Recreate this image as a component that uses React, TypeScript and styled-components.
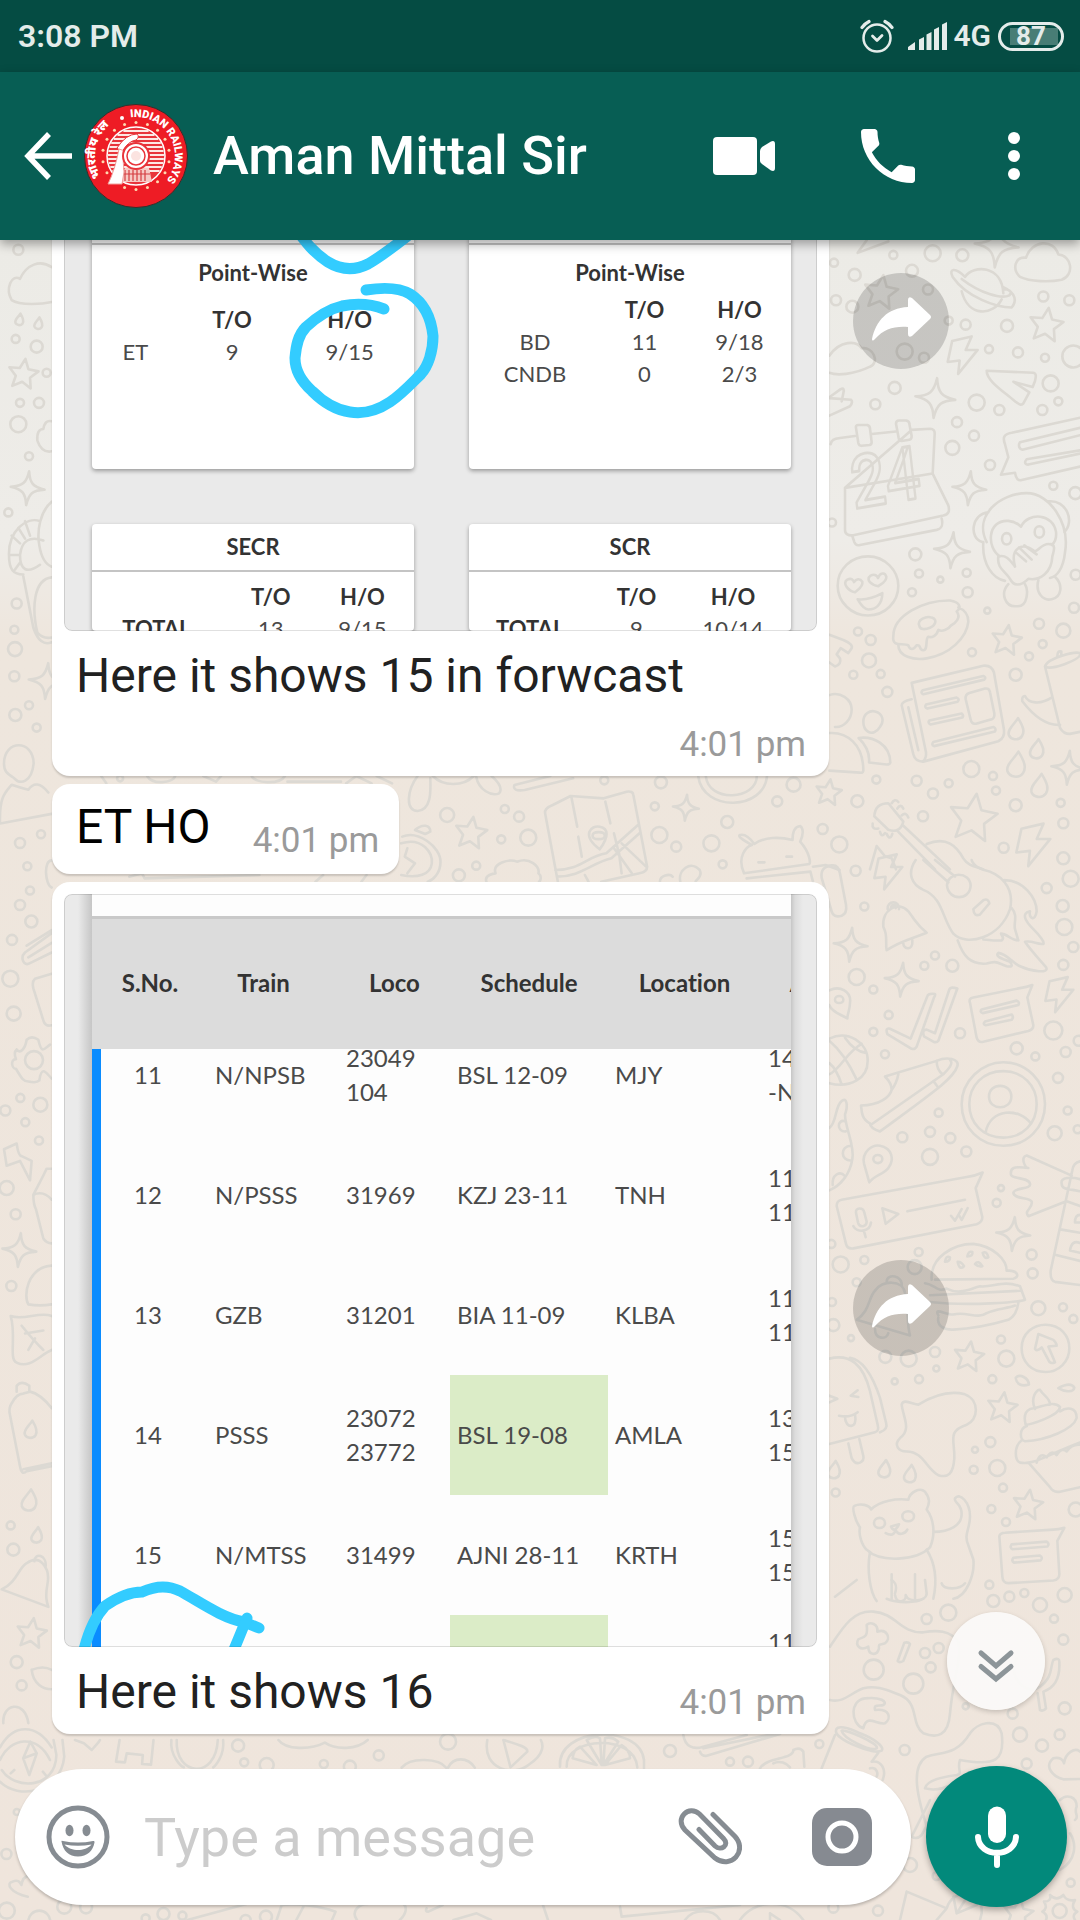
import React from "react";
import styled, { createGlobalStyle } from "styled-components";

const GlobalStyle = createGlobalStyle`
  * { box-sizing: border-box; }
  body { margin: 0; font-family: Roboto, "Noto Sans", sans-serif; background: #eee6dd; }
  button { border: 0; padding: 0; background: none; color: inherit; font: inherit; cursor: pointer; }
  svg { display: block; }
`;

/* ---------- wallpaper ---------- */

type Mark = [number, number, number];

interface SceneProps {
  x: number;
  y: number;
  sx: number;
  sy: number;
  dots?: Mark[];
  stars?: Mark[];
  sparks?: Mark[];
  drops?: Mark[];
  bolts?: Mark[];
  paths?: string[];
  children?: React.ReactNode;
}

const WallpaperLayer = styled.svg`
  position: absolute;
  inset: 0;
  width: 100%;
  height: 100%;
  fill: none;
  stroke: #dcd9d3;
  stroke-width: 2.6;
  stroke-linecap: round;
  stroke-linejoin: round;
  & * { vector-effect: non-scaling-stroke; }
`;

const STAR = "M0-10 2.9-3.5 9.8-3 4.8 2 6.2 9 0 5.4-6.2 9-4.8 2-9.8-3-2.9-3.5Z";
const SPARK = "M0-10C1-3 3-1 10 0C3 1 1 3 0 10C-1 3-3 1-10 0C-3-1-1-3 0-10Z";
const DROP = "M1-10C7-2 8 2 6 6C3 11-4 10-6 6C-8 1-2-4 1-10Z";
const BOLT = "M-7-9 6-12 2-3 10-3-3 13-2 4-10 5Z";

function Scene({ x, y, sx, sy, dots = [], stars = [], sparks = [], drops = [], bolts = [], paths = [], children }: SceneProps) {
  const place = (m: Mark, d: string, turn: number) => (
    <path
      key={d + m.join()}
      d={d}
      transform={`translate(${x + m[0] * sx} ${y + m[1] * sy}) rotate(${turn}) scale(${m[2] / 10})`}
    />
  );
  return (
    <g>
      {dots.map((m) => <circle key={m.join()} cx={x + m[0] * sx} cy={y + m[1] * sy} r={m[2]} />)}
      {stars.map((m) => place(m, STAR, 8))}
      {sparks.map((m) => place(m, SPARK, 5))}
      {drops.map((m) => place(m, DROP, 5))}
      {bolts.map((m) => place(m, BOLT, 0))}
      <g transform={`translate(${x} ${y}) scale(${sx} ${sy})`}>
        {paths.map((d) => <path key={d} d={d} />)}
        {children}
      </g>
    </g>
  );
}

function Wallpaper() {
  return (
    <WallpaperLayer viewBox="0 240 1080 1680" preserveAspectRatio="xMinYMax slice" aria-hidden="true">
      <Scene
        x={820} y={230} sx={1 / 3} sy={0.408}
        dots={[
          [338, 57, 8], [220, 61, 4], [427, 62, 6], [42, 80, 4], [104, 110, 6], [276, 100, 6], [48, 172, 5], [97, 188, 6],
          [324, 146, 5], [254, 298, 8], [312, 313, 5], [386, 222, 4], [437, 232, 5], [561, 235, 6], [670, 163, 5], [748, 172, 5],
          [507, 292, 4], [594, 300, 5], [675, 313, 4], [760, 310, 11], [224, 387, 6], [166, 427, 5], [470, 423, 8], [538, 441, 5],
          [692, 376, 8], [715, 420, 4], [667, 441, 5], [411, 471, 5], [462, 504, 5], [397, 534, 7], [510, 576, 5], [700, 627, 4],
          [766, 645, 6], [36, 717, 4], [286, 795, 6], [297, 842, 4], [361, 857, 3], [440, 840, 4], [276, 888, 4], [443, 888, 5],
          [502, 933, 3], [767, 845, 5], [762, 926, 5], [114, 984, 4], [152, 1005, 5], [147, 1055, 7], [100, 1090, 4], [182, 1088, 4],
          [202, 1132, 5], [456, 1035, 4], [657, 965, 5], [668, 1015, 4], [627, 1045, 4], [730, 982, 7], [587, 1090, 6],
          [169, 1347, 4], [290, 1350, 5], [339, 1381, 5], [386, 1356, 4], [454, 1321, 8], [519, 1338, 4], [528, 1374, 4],
          [112, 1400, 6], [309, 1437, 5], [587, 1410, 6], [722, 1404, 4], [730, 1454, 5], [551, 1514, 5], [58, 1506, 8], [730, 1540, 6],
        ]}
        stars={[[183, 152, 17], [679, 232, 17], [560, 1005, 15], [460, 1440, 24], [26, 1378, 13]]}
        sparks={[[346, 412, 20], [448, 633, 17], [396, 785, 18], [745, 1318, 17], [530, 38, 22]]}
        drops={[[588, 1223, 11], [650, 1272, 10], [588, 1310, 13], [658, 1362, 12]]}
        bolts={[[428, 305, 15], [640, 1505, 17]]}
        paths={[
          "M600 115C575 95 585 65 618 68C635 25 700 20 715 60C755 62 765 110 725 122C690 128 630 127 600 115Z",
          "M425 150C445 215 520 210 545 170M435 115C460 85 545 85 550 155M425 120C480 155 545 170 568 160C580 150 565 145 550 145M435 115C405 90 385 95 398 115C440 165 530 190 575 190C590 175 590 155 550 140",
          "M28 308C60 270 110 270 125 290C160 285 180 325 150 335C100 355 50 357 28 350",
          "M113 56 140 25M113 56 205 28",
          "M500 345 640 350C650 352 648 360 645 370L638 385 580 372 628 398 610 425C600 432 595 425 585 420C550 395 500 370 500 345Z",
          "M32 525C35 515 40 512 60 510L105 505M155 500 228 494M275 490 330 487Q345 487 344 500L338 597 385 675C390 690 385 697 370 700L100 748C85 750 75 745 75 735V632ZM75 632 338 597M97 750 103 765Q108 775 120 772L350 735C365 732 370 725 365 707M108 485Q106 478 115 478H142Q150 480 150 487L155 520Q155 526 148 527L125 529Q117 529 115 522ZM228 475Q228 467 237 467H258Q268 468 268 475L275 505Q275 513 268 514L245 517Q238 517 236 510Z",
          "M780 460 575 497C550 500 548 510 555 525L565 557 543 600 585 595C588 610 595 615 605 613L780 580M780 485 600 520C593 530 600 540 610 538L780 503M780 540 620 562C612 570 615 575 625 575L780 548",
          "M500 765C460 700 540 645 620 645C690 645 750 720 735 790C730 830 710 850 690 853M490 765C485 820 520 855 555 860M505 692C455 695 445 755 487 765M685 665C740 660 765 715 733 740M540 800C500 780 500 710 565 713C590 715 595 722 603 727C625 690 700 695 708 740C710 755 705 765 695 772M535 800C560 795 570 810 585 825C570 780 605 765 640 785C650 795 665 765 690 770C710 770 700 790 697 800C695 840 660 860 625 855C600 875 580 872 570 855C555 835 530 830 535 800ZM613 773 650 795M597 778 635 808M590 792 618 812M565 868C540 890 555 925 590 922C625 925 625 880 615 868M655 858C645 890 670 910 695 905C725 900 730 870 705 850",
          "M53 872C53 830 95 800 144 800C195 800 235 835 235 872C235 912 195 945 144 945C95 945 53 912 53 872ZM105 888C85 885 65 865 82 857C95 852 100 858 102 863C108 855 120 853 127 862C130 875 112 882 105 888ZM175 873C155 870 135 858 152 847C165 842 172 848 174 853C180 840 195 838 199 850C200 862 182 868 175 873ZM113 905C135 907 165 900 187 890C187 920 165 930 145 930C130 930 120 915 113 905Z",
          "M220 995C220 945 310 907 390 908C420 912 425 925 410 935C425 950 405 965 392 970C385 980 365 985 355 980C350 995 335 1000 325 997C315 1000 325 1030 310 1030C295 1030 305 1015 290 1018C280 1030 270 1030 265 1018C250 1010 215 1025 220 995ZM235 1018C235 1045 280 1055 320 1050C390 1040 440 1000 445 960C445 940 430 930 415 925M298 970C290 955 320 945 335 950C355 955 345 970 330 975C315 980 300 980 298 970Z",
          "M28 992 70 1005Q100 1015 95 1025L85 1037 62 1025 50 1040 60 1050Q65 1065 45 1070L28 1060",
          "M275 1110 490 1068Q515 1066 522 1085L552 1225Q555 1245 535 1253L310 1303Q285 1303 280 1285L245 1165Q245 1155 275 1150M275 1110 318 1280Q320 1295 308 1303M265 1170 295 1275M308 1128 490 1093Q500 1097 493 1102L310 1138Q300 1134 308 1128ZM318 1163 410 1146Q420 1150 413 1156L322 1173Q312 1170 318 1163ZM328 1202 425 1185Q432 1190 427 1195L332 1212Q322 1208 328 1202ZM340 1255 520 1218Q530 1222 525 1229L342 1265Q333 1262 340 1255ZM437 1150Q435 1138 448 1135L495 1124Q508 1122 510 1133L523 1185Q525 1198 512 1200L468 1210Q455 1212 452 1200Z",
          "M675 1070 720 1220Q730 1235 750 1235L780 1230M675 1070C680 1050 770 1030 782 1038C780 1055 690 1080 675 1070ZM712 1045Q712 1030 724 1033V1042M697 1145C660 1165 625 1160 615 1142Q605 1142 607 1155C640 1190 680 1215 720 1213",
          "M28 1140C60 1130 95 1150 95 1175C95 1200 70 1220 45 1218M28 1233C80 1230 130 1260 130 1325Q128 1332 120 1330L28 1325M130 1205C130 1185 150 1177 165 1180C190 1185 193 1205 180 1218C170 1232 155 1235 145 1230C135 1225 130 1215 130 1205ZM116 1245C160 1240 210 1260 211 1305Q210 1310 200 1310L147 1305C150 1280 135 1260 116 1245Z",
          "M28 455 90 432Q100 422 93 416L28 412M28 410 62 390Q75 385 70 400L65 420",
          "M163 1437Q165 1405 205 1405L250 1450Q240 1480 205 1470ZM250 1460 390 1567M235 1475 345 1567M215 1405Q225 1392 235 1402M232 1418Q242 1405 250 1418M245 1435Q258 1425 265 1440M158 1455Q155 1470 175 1467M180 1475Q185 1490 195 1478M200 1480Q210 1498 217 1480M320 1505C380 1485 410 1510 430 1540C445 1560 470 1560 490 1567M170 1510 195 1535 215 1540 228 1567M170 1510 150 1567",
        ]}
      >
        <circle cx={560} cy={757} r={14} /><circle cx={658} cy={740} r={14} />
        <text x={102} y={684} fontFamily="Roboto, sans-serif" fontSize={182} fontWeight={500} transform="rotate(-8 102 684)">24</text>
      </Scene>

      <Scene
        x={820} y={860} sx={1 / 3} sy={0.4464}
        dots={[
          [107, 24, 5], [133, 104, 4], [110, 262, 8], [160, 290, 4], [313, 237, 4], [345, 214, 4], [397, 237, 6], [206, 347, 4], [160, 385, 4],
          [195, 435, 4], [420, 388, 5], [680, 63, 5], [752, 42, 8], [728, 103, 6], [733, 150, 8], [760, 195, 5], [730, 235, 5], [700, 382, 9],
          [590, 422, 6], [646, 440, 4], [737, 430, 5], [714, 488, 5], [776, 405, 5], [743, 561, 4], [704, 612, 7], [773, 603, 4], [356, 566, 4],
          [247, 621, 5], [330, 609, 5], [391, 623, 5], [439, 653, 5], [330, 665, 8], [543, 735, 3], [530, 768, 4], [296, 878, 4], [62, 906, 8],
          [133, 896, 4], [284, 912, 7], [110, 946, 4], [40, 1042, 6], [93, 1071, 3], [635, 884, 5], [638, 926, 5], [655, 1004, 7], [729, 1002, 4],
          [760, 1028, 4], [543, 1074, 4], [559, 1117, 8], [345, 1102, 5], [349, 1139, 3], [297, 1163, 4], [196, 1113, 6], [266, 1117, 8], [224, 1168, 3],
          [517, 1163, 4], [465, 1321, 3], [511, 1304, 5], [461, 1366, 4], [532, 1362, 8], [549, 1406, 4], [514, 1454, 4], [558, 1483, 4], [767, 1455, 7],
          [47, 1417, 4], [36, 990, 4], [34, 860, 4],
        ]}
        stars={[[447, 1112, 15], [547, 1226, 15], [624, 1444, 15]]}
        sparks={[[92, 190, 17], [245, 268, 17], [580, 838, 17]]}
        drops={[[193, 1364, 9], [270, 1375, 9], [42, 1366, 9]]}
        bolts={[[718, 300, 14], [205, 25, 14]]}
        paths={[
          "M5 40Q0 15 35 12Q55 10 60 30L78 100Q82 120 65 125Q40 130 35 115Z",
          "M287 0C260 30 275 55 310 67C370 85 365 130 400 165C440 195 540 175 570 110C585 60 540 30 490 22C460 15 455 0 455 0M310 0 385 50M345 0 405 37M381 57C383 25 450 25 452 57C450 92 385 92 381 57ZM460 110 490 90Q505 85 508 97L480 122Q462 128 460 110ZM553 45C610 45 650 85 650 115C645 140 625 130 630 115C600 120 620 140 640 155C660 170 675 185 670 188C650 190 640 180 615 183C630 200 655 220 678 240C690 255 635 250 600 238C580 232 560 210 535 208C525 215 540 220 570 228C580 238 575 240 560 238C530 230 530 225 500 232C450 235 430 215 413 180M575 108C595 125 580 140 585 155L595 180C575 180 560 165 543 165C545 170 555 175 545 180C520 182 505 178 490 178",
          "M190 150C185 110 235 90 265 115C295 145 290 145 320 163C270 178 245 180 200 202C195 185 205 170 190 150ZM203 110C200 90 240 90 237 110M213 107C215 98 230 100 227 108M250 187C250 200 280 205 277 180",
          "M28 292C60 280 95 295 90 320C90 335 82 345 82 355C60 345 35 340 28 325M45 313C45 302 70 302 70 313C70 323 45 323 45 313Z",
          "M28 400C85 380 145 410 143 450C143 490 90 512 28 500M28 405C60 425 90 460 110 492M75 398C95 420 120 430 138 432M125 412C80 430 60 470 28 480M28 455C45 465 55 480 65 503",
          "M202 390Q195 375 210 378L272 400 322 305Q325 298 345 300 347 302 342 308L290 418Q285 425 275 423ZM312 395Q305 380 320 380L345 388 388 290Q392 283 412 288L355 405Q350 410 340 407Z",
          "M450 320Q445 310 460 308L600 287Q620 285 637 280L622 308 640 370Q640 380 625 383L490 407Q475 410 470 398ZM485 335 590 315Q600 318 595 325L488 343Q478 340 485 335ZM495 362 575 346Q582 352 575 358L497 370Q487 368 495 362Z",
          "M123 550C180 550 210 530 215 515Q215 500 195 485L350 450C380 440 420 445 412 462C400 490 340 520 180 608Q150 600 150 590C125 580 125 565 123 550ZM155 592 370 480C390 465 400 455 390 447M235 480Q230 500 215 515M350 450Q350 470 368 480M340 495 355 510",
          "M425 547C425 495 485 453 550 453C620 453 675 495 675 547C675 600 620 640 550 640C480 640 425 600 425 547ZM448 547C448 505 490 473 550 473C608 473 650 505 650 547C650 590 608 622 550 622C490 622 448 590 448 547ZM507 530C507 498 574 498 574 530C574 562 507 562 507 530ZM497 610C510 555 600 555 632 590",
          "M28 600C50 590 45 550 65 540C80 530 85 550 75 570C75 600 105 640 97 670C90 705 60 730 28 740M75 585C50 580 50 610 77 608M93 640C60 640 60 675 95 673M75 708C60 695 35 705 38 728",
          "M132 680C125 655 155 637 180 640C215 645 225 670 205 690C190 705 165 705 148 722ZM160 670C160 658 187 658 187 670C187 682 160 682 160 670Z",
          "M50 775Q50 763 65 761L440 710Q465 708 488 700L467 735 487 800Q487 812 470 816L100 870Q82 872 78 860ZM262 787 435 761M187 780 235 793 197 815ZM108 790C105 778 130 777 133 790L140 810C140 822 118 825 114 812ZM100 820C110 835 150 835 153 812M132 832 137 845M393 797 405 808 425 782M418 797 425 806 443 780",
          "M755 707 620 662C600 665 615 690 625 690C580 685 570 690 573 705C575 715 625 710 630 725C635 738 585 733 580 745C580 760 630 755 635 765C640 780 610 785 625 798L737 765M780 675Q760 678 757 695L692 920Q690 942 705 945L780 952M725 725C720 710 755 710 780 715M725 725C725 740 755 737 780 742M742 765 780 775M725 828 780 835M708 885 780 898M780 795Q765 795 765 812H780M780 858Q755 850 750 875L780 880",
          "M335 940C330 890 400 860 460 860C520 865 560 895 560 920C595 918 600 935 580 938L345 940M315 948C345 950 350 970 380 960C420 975 450 960 480 955C520 958 550 940 600 955L615 985C600 990 450 1000 330 990M330 975 600 965M355 1025C350 1045 375 1053 400 1052C460 1050 520 1040 565 1030Q590 1020 595 992M355 1020C340 1000 380 1020 400 1018C440 1010 470 1030 500 1015C530 1005 560 1005 585 998",
          "M375 900Q378 885 390 890Q390 900 375 900ZM413 900Q425 900 432 910Q418 920 413 900ZM442 888Q445 875 457 878Q460 888 442 888ZM465 905Q475 895 487 910Q475 912 465 905ZM488 880Q500 875 505 890Q492 895 488 880Z",
          "M605 1094C605 1060 640 1041 677 1041C720 1041 748 1065 748 1094C748 1125 715 1147 677 1147C635 1147 605 1125 605 1094ZM655 1062Q650 1080 645 1095Q650 1102 665 1092L685 1120Q690 1130 705 1125L685 1090 710 1088Q710 1082 700 1075Z",
          "M110 1030C150 1010 145 980 165 965C185 940 250 940 255 970C265 1000 260 1040 270 1065ZM200 945C200 925 250 930 245 955M165 1050C165 1075 200 1075 205 1060",
          "M28 1117C90 1105 130 1130 150 1190L173 1265Q178 1280 165 1282L28 1308M90 1115C130 1120 160 1160 180 1205L198 1260Q205 1275 180 1282M85 1307 95 1340Q105 1355 120 1350Q133 1345 130 1335L118 1297M113 1188 92 1200 115 1203M28 1200 52 1207 28 1215M57 1245Q90 1250 113 1237M75 1248C75 1275 115 1275 105 1243",
          "M245 1220C250 1205 280 1220 295 1220C350 1195 400 1190 435 1197C480 1210 475 1255 440 1265C380 1280 405 1300 403 1340C400 1375 385 1385 355 1378C320 1365 310 1325 260 1325C235 1325 220 1310 240 1295C275 1275 250 1250 245 1220Z",
          "M645 1230C630 1205 650 1185 660 1187C670 1200 690 1205 690 1220M630 1230C670 1225 700 1210 720 1225C720 1245 630 1265 617 1265C610 1245 615 1235 630 1230ZM620 1268C595 1275 600 1300 615 1302C680 1300 760 1275 770 1250C770 1225 740 1225 720 1235M605 1300C580 1315 585 1345 600 1350C640 1355 660 1340 780 1305M628 1352 690 1405Q700 1418 720 1415L780 1405M650 1350Q660 1325 680 1338Q695 1320 710 1333Q725 1315 740 1325Q755 1308 780 1310M587 1160C600 1150 625 1160 627 1175C605 1180 590 1175 587 1160ZM715 1183C730 1190 760 1195 763 1182C755 1172 735 1175 715 1183Z",
          "M120 1495C105 1480 95 1450 103 1447C120 1440 150 1445 153 1455C180 1435 230 1430 265 1433C270 1415 300 1405 315 1415C330 1430 330 1440 320 1455C345 1480 345 1515 330 1540C290 1570 180 1575 140 1545C125 1535 115 1510 120 1495ZM162 1485C162 1470 195 1470 195 1485C195 1500 162 1500 162 1485ZM247 1470C247 1455 282 1455 282 1470C282 1485 247 1485 247 1470ZM213 1493C220 1505 230 1500 237 1488ZM197 1508C215 1515 225 1510 226 1500C235 1515 255 1510 262 1500M340 1505C390 1505 425 1490 425 1465C425 1440 400 1440 405 1430C420 1415 450 1440 450 1470C450 1500 430 1510 445 1535L460 1567C465 1600 440 1650 400 1655",
          "M538 1515Q540 1507 555 1507L700 1500Q715 1500 733 1496L712 1525 718 1600Q718 1612 700 1614L565 1620Q548 1620 547 1605ZM575 1533 680 1527Q690 1532 682 1538L577 1544Q568 1540 575 1533ZM580 1563 660 1558Q670 1563 662 1569L582 1574Q573 1570 580 1563Z",
          "M150 1550C140 1590 150 1640 170 1660M320 1545C350 1580 350 1620 340 1655M200 1655C230 1665 290 1665 310 1655M215 1600V1655M285 1600V1655",
        ]}
      />

      <Scene
        x={560} y={1580} sx={1 / 3} sy={1 / 3}
        dots={[
          [1100, 117, 5], [1165, 98, 8], [1300, 63, 6], [1348, 50, 5], [1393, 39, 4], [1440, 75, 7], [1514, 45, 7], [1482, 116, 4], [1510, 179, 5],
          [1095, 219, 5], [1136, 204, 5], [1112, 262, 5], [941, 269, 10], [1060, 311, 10], [1217, 379, 3], [1358, 401, 5], [1514, 385, 6],
          [1380, 464, 7], [1446, 497, 6], [1499, 464, 5], [1400, 551, 5], [1034, 510, 5], [778, 492, 4], [330, 513, 6], [510, 545, 4], [564, 545, 5],
          [1050, 855, 7], [1532, 908, 4], [1130, 888, 4], [820, 983, 5], [954, 992, 5], [1288, 14, 4], [1499, 993, 7],
        ]}
        stars={[[1375, 1000, 15]]}
        paths={[
          "M810 200C850 140 880 90 940 95C1010 100 1020 160 1090 157C1130 150 1170 150 1195 185C1205 240 1180 290 1170 400C1165 470 1130 475 1090 460C1050 430 1080 370 1020 345C980 330 950 315 910 325C870 340 850 370 810 360M920 135C930 125 955 130 952 155C980 145 995 175 975 190C960 195 955 190 957 205C950 230 925 225 925 200C900 215 885 195 895 178C910 170 925 175 920 135ZM1033 188Q1045 185 1050 192L1030 243Q1018 250 1013 243Z",
          "M825 50 890 0M1005 40C1015 10 1000 5 995 0M1005 45C1010 75 1040 65 1037 45C1045 70 1100 65 1100 40L1095 0M1145 10C1150 30 1200 30 1215 10M1370 235C1340 290 1400 350 1440 320C1480 290 1470 260 1480 240Q1500 230 1498 250C1500 300 1480 325 1450 335L1458 385Q1450 395 1440 390L1433 340",
          "M910 445C870 430 870 360 915 355C960 350 985 365 970 375C960 380 940 370 945 390C990 385 995 415 975 430C950 435 920 400 910 445Z",
          "M828 455C825 430 870 445 900 460C940 475 975 500 965 512C940 525 830 480 828 455ZM845 452C850 445 960 490 950 505C930 515 850 475 845 452ZM825 465 785 565M955 518 935 545M935 545C965 540 980 570 968 600M930 565C950 560 955 580 950 590",
          "M1110 770C1070 650 1050 560 1100 530C1150 515 1190 525 1230 460C1250 430 1310 410 1325 460C1335 540 1310 560 1200 540C1190 570 1210 580 1190 585C1150 590 1100 600 1095 625C1130 635 1170 620 1190 605M1110 660 1055 770Q1070 780 1085 765L1125 690",
          "M1510 598C1480 590 1450 560 1480 535C1500 530 1510 540 1512 550C1515 520 1545 500 1560 515M1510 598 1560 597M1500 660C1520 640 1550 650 1550 680C1540 700 1560 710 1545 720M1530 760C1550 790 1550 840 1500 870",
          "M0 560C-10 440 240 430 252 540L252 565M20 560C15 470 225 460 232 562M125 555 80 480Q105 465 120 475ZM130 555 135 475Q155 468 175 485ZM135 555 185 495Q210 510 210 535ZM110 555 60 500Q40 510 38 535Z",
          "M370 465C375 500 400 510 430 500L560 465M430 505 640 462M420 515Q425 530 440 527L660 462M600 565C620 530 700 540 700 510Q720 500 730 515L733 560M640 550C660 540 680 550 690 562",
          "M1040 935 1020 1020M1040 935 1160 985 1130 1020M1160 985C1180 920 1270 930 1265 1000L1260 1020M1190 1000 1180 950M1190 1000 1225 945M1190 1000 1250 975M540 1020C580 960 680 950 730 1020M630 1000V1020M630 1000 660 1020M185 1010 180 980M185 1010 540 975M375 1020C400 985 460 985 480 1020",
          "M1470 945Q1490 965 1510 945Q1520 965 1545 960Q1530 985 1552 995Q1535 1005 1545 1020M1470 945Q1475 965 1452 965Q1465 985 1447 995Q1465 1005 1458 1020",
        ]}
      />

      <Scene
        x={0} y={1740} sx={0.357} sy={1 / 3}
        dots={[
          [667, 17, 6], [684, 67, 4], [747, 75, 7], [1061, 46, 5], [1255, 5, 8], [907, 72, 4], [980, 80, 6], [47, 216, 3], [18, 342, 5], [19, 512, 8],
          [180, 500, 7], [241, 502, 6], [458, 522, 6], [511, 527, 4], [408, 535, 4], [688, 540, 5], [745, 530, 6], [110, 545, 11],
        ]}
        paths={[
          "M0 125C50 180 170 160 180 50L175 0M5 90C40 150 155 150 158 45L150 0M65 55 85 5 103 40 82 105ZM65 55 103 40M30 100 40 90M120 95 130 108",
          "M210 0 235 10 257 30 275 8 280 0M335 0 325 65 350 67 355 40 400 45 398 72 423 74 430 0M480 0C475 50 510 80 515 82M625 0C630 50 600 80 597 82M495 0C490 110 605 120 610 0",
          "M78 470C30 460 15 430 35 425C50 418 55 425 60 435C65 400 95 400 105 420",
          "M780 0C800 30 870 30 910 8C940 30 1000 30 1030 0M1125 83C1150 50 1230 55 1250 83M1255 83C1270 50 1310 50 1330 83M1365 0C1350 90 1440 110 1480 75C1530 40 1520 10 1515 0M1410 0 1430 82 1477 35C1480 20 1440 10 1410 0",
          "M525 540 690 492M775 540 790 492M790 495C840 490 900 500 940 515L930 540M850 500 830 540M1000 540C980 510 1010 492 1030 492M1120 540C1140 520 1140 500 1130 492M1195 505Q1190 515 1200 515L1240 495M1270 540 1335 520 1375 540M1520 492 1535 540",
        ]}
      />

      <Scene
        x={40} y={640} sx={0.5102} sy={1 / 3}
        dots={[
          [798, 525, 7], [911, 507, 4], [939, 530, 5], [957, 593, 8], [904, 598, 4], [855, 677, 4], [821, 706, 6], [1106, 421, 4], [1217, 427, 6],
          [1205, 499, 4], [1347, 546, 6], [1214, 585, 8], [1316, 610, 8], [1247, 620, 5], [1338, 673, 4], [1445, 484, 5], [1477, 434, 7], [1534, 567, 5],
          [157, 415, 3],
        ]}
        stars={[[845, 578, 16]]}
        sparks={[[1266, 503, 13]]}
        paths={[
          "M990 520Q988 505 1005 495L1040 468 1105 475 1150 455Q1162 452 1163 465L1190 680Q1190 695 1175 700L1100 725M990 520 1015 725M1010 690C1060 690 1070 650 1110 640L1172 555M1013 710C1060 710 1080 670 1120 655L1175 580M1125 625 1160 700M1140 610 1188 680M1097 628C1060 585 1080 555 1097 560C1115 565 1115 590 1097 628ZM1083 587C1083 573 1107 573 1107 587C1107 601 1083 601 1083 587ZM1042 475 1053 560M1108 485 1118 550M1055 590 1062 650M1125 580 1133 630M1135 640 1140 700M1068 705 1075 725",
          "M1380 700C1365 650 1385 620 1395 615Q1365 590 1372 585Q1385 580 1400 612C1420 590 1450 590 1475 600Q1475 560 1490 558Q1500 570 1490 605C1510 640 1510 670 1508 672ZM1408 667H1420M1463 650H1474M1385 715 1510 695L1515 725M1515 680 1540 675 1567 690",
          "M1290 408C1300 520 1420 510 1425 408M1305 408C1310 490 1405 480 1405 408M770 408C790 440 830 440 850 408M740 408C720 450 715 510 740 513C770 510 765 440 765 415M855 410C860 450 885 470 900 460C910 440 890 415 885 408M930 435 1000 408M930 435Q925 455 950 450L1045 415",
          "M710 590C740 570 785 620 785 665C785 700 770 720 760 725M708 610C750 590 770 640 768 670C765 705 740 715 708 705M720 625 715 650 735 670 720 700M735 570C750 550 765 555 765 575L755 582Z",
          "M875 725C870 705 890 700 893 700C885 670 920 655 935 665C960 650 980 680 977 700C985 710 980 725 978 725M1215 725C1215 705 1235 700 1240 710M1255 725C1250 690 1275 660 1293 690C1300 710 1285 720 1285 725",
          "M320 408 345 425 355 408M415 408C420 430 470 435 480 408M485 425H590M600 430 620 408 650 430M660 408 690 430M120 408 130 430M210 408C220 435 260 430 265 408M175 710 200 700 205 715 430 705M540 725 555 705M630 725 640 705",
        ]}
      />

      <Scene
        x={0} y={240} sx={1 / 3} sy={0.9694}
        dots={[
          [55, 10, 5], [47, 102, 4], [110, 110, 6], [60, 168, 4], [117, 168, 5], [55, 190, 8], [87, 223, 4], [25, 281, 4], [140, 137, 4],
          [50, 375, 5], [43, 402, 4], [45, 422, 7], [43, 450, 5], [46, 490, 6], [87, 480, 4], [110, 503, 4], [60, 622, 5], [123, 613, 4], [82, 646, 4],
          [90, 671, 4], [60, 686, 5], [94, 703, 6], [36, 722, 5], [31, 762, 8], [41, 798, 7], [102, 846, 9], [61, 885, 4], [121, 892, 7], [76, 910, 4],
          [117, 929, 4], [16, 898, 5], [20, 978, 7], [47, 1005, 5], [34, 1079, 5], [32, 1326, 4], [40, 1351, 6], [50, 1467, 6], [65, 1491, 5],
        ]}
        stars={[[70, 138, 15], [95, 1437, 15]]}
        sparks={[[83, 256, 17], [58, 1042, 17], [140, 455, 18]]}
        drops={[[58, 82, 6], [115, 86, 6], [87, 1300, 11], [110, 1336, 8], [92, 1227, 9]]}
        paths={[
          "M35 62C15 50 35 35 60 40C80 25 120 20 155 28M35 62C60 68 130 66 155 64M112 207Q110 195 130 195 135 185 155 187M112 207Q125 220 155 218",
          "M27 325C25 300 80 285 120 290M27 325C27 340 40 345 70 345M60 325C65 310 90 305 130 310M60 325C60 340 80 345 120 335M35 305 60 313M27 325H58M45 340 62 332M75 290 90 305M55 297 75 308M155 270C120 280 110 300 118 315C125 330 140 335 155 337M70 347 100 400Q120 420 155 415M155 348C100 350 95 380 112 405Q130 412 155 410",
          "M12 540C12 515 100 515 101 540C95 560 60 562 42 555C20 550 12 548 12 540ZM0 600C-2 575 15 570 35 562Q60 565 85 567Q110 555 145 570M0 602 155 592M155 640C130 640 135 665 155 668",
          "M155 715 75 735C60 740 70 750 90 746L155 735M80 728 155 712M85 740 155 725M155 757 105 762Q95 765 100 772L130 805Q135 812 155 810",
          "M50 835C60 840 75 835 80 825Q95 820 115 825C125 840 130 835 150 830M50 835Q40 838 48 845C30 845 35 855 48 855C65 865 70 868 85 868Q110 870 118 867C125 850 140 860 155 865",
          "M12 938 50 932Q55 945 65 945L95 950 90 970 60 950 20 955ZM155 958H140L130 965 100 985Q100 995 108 1000L130 1030Q140 1035 155 1035M100 985Q130 980 155 990M155 1058C80 1060 70 1090 85 1098Q120 1100 155 1098",
          "M32 1110C70 1115 120 1105 155 1110M32 1110C50 1130 25 1155 50 1158C90 1165 120 1150 155 1145M65 1120Q100 1135 130 1145M85 1145 105 1133M75 1128 130 1125",
          "M35 1200Q50 1190 70 1190L90 1188Q120 1190 155 1205M50 1188V1182Q65 1176 88 1182V1188M35 1200Q25 1205 30 1212L60 1265Q65 1275 80 1270L155 1265M70 1268 155 1262",
          "M5 1392C50 1385 55 1370 80 1365C120 1355 150 1370 143 1385C135 1400 140 1405 145 1410ZM103 1363C105 1353 140 1357 137 1368M95 1475Q130 1470 155 1475M95 1475C100 1490 130 1495 155 1495M10 1530C5 1510 75 1505 85 1530M0 1555C40 1530 110 1530 155 1555M0 1568C30 1545 110 1540 150 1568",
        ]}
      />
    </WallpaperLayer>
  );
}

/* ---------- frame ---------- */

const Screen = styled.div`
  height: 100vh;
  display: flex;
  flex-direction: column;
  overflow: hidden;
`;

const StatusBar = styled.div`
  height: 72px;
  flex: none;
  display: flex;
  align-items: center;
  padding: 0 16px 0 18px;
  background: #054c43;
  color: #e4ecea;
  font-size: 32px;
  font-weight: 600;
  line-height: 40px;
`;

const Clock = styled.time`
  flex: 1;
`;

const Network = styled.span`
  margin: 0 7px 0 6px;
  font-size: 30px;
`;

const Battery = styled.span`
  position: relative;
  display: flex;
  align-items: center;
  justify-content: center;
  width: 66px;
  height: 29px;
  border: 3px solid #e4ecea;
  border-radius: 15px;
  font-size: 26px;
  font-weight: 700;
  line-height: 24px;
  background: linear-gradient(#487d75, #487d75) 9px 3px / 48px 17px no-repeat;
`;

const AppBar = styled.header`
  position: relative;
  z-index: 2;
  height: 168px;
  flex: none;
  display: flex;
  align-items: center;
  gap: 80px;
  padding: 0 52px 0 24px;
  background: #075e54;
  color: #fff;
  box-shadow: 0 4px 10px rgba(0, 0, 0, 0.35);
`;

const Contact = styled.div`
  flex: 1;
  min-width: 0;
  display: flex;
  align-items: center;
  gap: 12px;
`;

const ContactName = styled.h1`
  margin: 0 0 0 13px;
  font-size: 54px;
  font-weight: 500;
  line-height: 64px;
  white-space: nowrap;
`;

const IconButton = styled.button<{ $w: number }>`
  flex: none;
  width: ${(p) => p.$w}px;
  height: 64px;
  display: flex;
  align-items: center;
  justify-content: center;
`;

const Chat = styled.main`
  position: relative;
  flex: 1;
  min-height: 0;
  display: flex;
  flex-direction: column;
  background: linear-gradient(#ecebe6 0, #eeece8 300px, #eee6dd 400px, #efe5dc 100%);
`;

const MessageList = styled.ol`
  position: relative;
  flex: 1;
  min-height: 0;
  margin: 0;
  padding: 0 24px 32px 52px;
  display: flex;
  flex-direction: column;
  justify-content: flex-end;
  gap: 8px;
  overflow: hidden;
  list-style: none;
`;

const MessageRow = styled.li`
  flex: none;
  display: flex;
  align-items: center;
  gap: 24px;
`;

const MediaBubble = styled.article`
  width: 777px;
  max-width: 85%;
  padding: 12px 12px 0;
  border-radius: 18px;
  background: #fff;
  box-shadow: 0 2px 2px rgba(0, 0, 0, 0.16);
`;

const Caption = styled.div`
  display: flex;
  flex-wrap: wrap;
  gap: 20px;
  min-height: 87px;
  padding: 17px 11px 10px 12px;
`;

const TextBubble = styled.article`
  display: flex;
  gap: 42px;
  min-height: 90px;
  padding: 15px 20px 12px 24px;
  border-radius: 18px;
  background: #fff;
  box-shadow: 0 2px 2px rgba(0, 0, 0, 0.16);
`;

const MessageText = styled.p<{ $dark?: boolean }>`
  margin: 0;
  align-self: flex-start;
  color: ${(p) => (p.$dark ? "#000" : "#212121")};
  font-size: 48px;
  line-height: 56px;
`;

const SentAt = styled.time`
  margin-left: auto;
  align-self: flex-end;
  color: #9a9a9a;
  font-size: 35px;
  line-height: 42px;
`;

const ForwardButton = styled.button`
  flex: none;
  width: 96px;
  height: 96px;
  border-radius: 50%;
  background: rgba(0, 0, 0, 0.16);
`;

/* ---------- shared photos ---------- */

const Photo = styled.div<{ $size: number }>`
  position: relative;
  aspect-ratio: 1;
  overflow: hidden;
  border-radius: 8px;
  background: #eaeaea;
  color: #4a4a4a;
  font-family: Lato, "Noto Sans", sans-serif;
  font-size: ${(p) => p.$size}px;
  font-variant-ligatures: none;
  line-height: 32px;
  &::after {
    content: "";
    position: absolute;
    inset: 0;
    border: 1px solid rgba(0, 0, 0, 0.12);
    border-radius: 8px;
  }
`;

const Ink = styled.svg`
  position: absolute;
  inset: 0;
  width: 100%;
  height: 100%;
  fill: none;
  stroke: #33ccff;
  stroke-width: 11;
  stroke-linecap: round;
  stroke-linejoin: round;
`;

const CardGrid = styled.div`
  display: grid;
  grid-template-columns: 1fr 1fr;
  grid-template-rows: 591px 107px;
  gap: 55px;
  padding: 0 26px 0 28px;
`;

const Card = styled.section`
  display: flex;
  flex-direction: column;
  border-radius: 4px;
  background: #fff;
  box-shadow: 0 2px 4px rgba(0, 0, 0, 0.35);
`;

const CardHead = styled.h2<{ $tall?: boolean }>`
  height: ${(p) => (p.$tall ? 367 : 48)}px;
  flex: none;
  margin: 0;
  padding-top: 7px;
  border-bottom: 2px solid #c4c4c4;
  color: #333;
  font-size: 22px;
  line-height: 32px;
  text-align: center;
`;

const CardTitle = styled.h3<{ $gap: number }>`
  margin: 12px 0 ${(p) => p.$gap}px;
  color: #333;
  font-size: 22px;
  line-height: 32px;
  text-align: center;
`;

const CountTable = styled.table<{ $top?: number }>`
  width: 100%;
  margin-top: ${(p) => p.$top ?? 0}px;
  table-layout: fixed;
  border-collapse: collapse;
  th, td { height: 32px; padding: 0; text-align: center; font-weight: 400; white-space: nowrap; }
  thead th { color: #333; font-weight: 700; }
`;

const Col = styled.col<{ $w: number }>`
  width: ${(p) => p.$w}%;
`;

const StrongCell = styled.th`
  && { color: #333; font-weight: 700; }
`;

interface CountProps {
  cols: number[];
  rows: string[][];
  top?: number;
  strong?: boolean;
}

function Counts({ cols, rows, top, strong }: CountProps) {
  return (
    <CountTable $top={top}>
      <colgroup>{cols.map((w, i) => <Col key={i} $w={w} />)}</colgroup>
      <thead>
        <tr><td /><th scope="col">T/O</th><th scope="col">H/O</th></tr>
      </thead>
      <tbody>
        {rows.map(([name, taken, handed]) => (
          <tr key={name}>
            {strong ? <StrongCell scope="row">{name}</StrongCell> : <th scope="row">{name}</th>}
            <td>{taken}</td>
            <td>{handed}</td>
          </tr>
        ))}
      </tbody>
    </CountTable>
  );
}

function ForecastPhoto() {
  return (
    <Photo $size={22}>
      <CardGrid>
        <Card>
          <CardHead $tall />
          <CardTitle $gap={15}>Point-Wise</CardTitle>
          <Counts cols={[27, 33, 40]} rows={[["ET", "9", "9/15"]]} />
        </Card>
        <Card>
          <CardHead $tall />
          <CardTitle $gap={5}>Point-Wise</CardTitle>
          <Counts cols={[41, 27, 32]} rows={[["BD", "11", "9/18"], ["CNDB", "0", "2/3"]]} />
        </Card>
        <Card>
          <CardHead>SECR</CardHead>
          <Counts top={9} cols={[40, 31, 26, 3]} rows={[["TOTAL", "13", "9/15"]]} strong />
        </Card>
        <Card>
          <CardHead>SCR</CardHead>
          <Counts top={9} cols={[38, 28, 32, 2]} rows={[["TOTAL", "9", "10/14"]]} strong />
        </Card>
      </CardGrid>
      <Ink viewBox="64 -122 753 753" aria-hidden="true">
        <path d="M294 226C306 243 314 253 328 262C341 270 354 271 368 264C382 256 396 245 410 234" />
        <path d="M366 290C385 287 400 288 410 294C424 303 431 316 433 336C433 352 428 366 421 374C410 385 402 394 390 402C375 412 362 414 350 412C335 410 322 401 312 391C302 382 295 372 295 358C296 346 298 335 306 327C318 316 329 309 342 306C357 303 371 304 384 309" />
      </Ink>
    </Photo>
  );
}

const Sheet = styled.div`
  height: 100%;
  margin: 0 26px 0 28px;
  overflow: hidden;
  background: #fdfdfd;
`;

const SheetShade = styled.div`
  height: 100%;
  background: linear-gradient(90deg, #eaeaea 0 14px, #c6c6c6 28px calc(100% - 26px), #dcdcdc calc(100% - 22px), #eaeaea calc(100% - 14px));
`;

const TrainTable = styled.table`
  display: block;
  padding-top: 22px;
  tr {
    display: grid;
    grid-template-columns: 116px 131px 111px 158px 153px 74px;
  }
  thead {
    display: block;
    position: relative;
    z-index: 1;
    height: 133px;
    border-top: 3px solid #c9c9c9;
    background: #dcdcdc;
  }
  tbody {
    display: block;
    margin-top: -34px;
    border-left: 9px solid #0a8cff;
  }
  tbody tr {
    height: 120px;
    grid-template-columns: 107px 131px 111px 158px 153px 74px;
  }
  th { padding: 48px 0 0; color: #333; text-align: center; }
  th:nth-child(2) { padding-right: 20px; }
`;

const Cell = styled.td<{ $marked?: boolean }>`
  display: flex;
  align-items: center;
  padding: 0 0 0 7px;
  line-height: 34px;
  white-space: pre;
  background: ${(p) => (p.$marked ? "#dbecc7" : "none")};
`;

const NumberCell = styled(Cell)`
  justify-content: center;
  padding: 0 13px 0 0;
`;

const TopCell = styled(Cell)`
  align-items: flex-start;
  padding-top: 10px;
`;

interface Train {
  no: string;
  train: string;
  loco: string;
  schedule: string;
  location: string;
  next: string;
  due?: boolean;
}

const trains: Train[] = [
  { no: "11", train: "N/NPSB", loco: "23049\n104", schedule: "BSL 12-09", location: "MJY", next: "14\n-N" },
  { no: "12", train: "N/PSSS", loco: "31969", schedule: "KZJ 23-11", location: "TNH", next: "11\n11" },
  { no: "13", train: "GZB", loco: "31201", schedule: "BIA 11-09", location: "KLBA", next: "11\n11" },
  { no: "14", train: "PSSS", loco: "23072\n23772", schedule: "BSL 19-08", location: "AMLA", next: "13\n15", due: true },
  { no: "15", train: "N/MTSS", loco: "31499", schedule: "AJNI 28-11", location: "KRTH", next: "15\n15" },
];

function TrainPhoto() {
  return (
    <Photo $size={24}>
      <SheetShade>
        <Sheet>
          <TrainTable>
            <thead>
              <tr>
                <th scope="col">S.No.</th>
                <th scope="col">Train</th>
                <th scope="col">Loco</th>
                <th scope="col">Schedule</th>
                <th scope="col">Location</th>
                <th scope="col">A</th>
              </tr>
            </thead>
            <tbody>
              {trains.map((t) => (
                <tr key={t.no}>
                  <NumberCell>{t.no}</NumberCell>
                  <Cell>{t.train}</Cell>
                  <Cell>{t.loco}</Cell>
                  <Cell $marked={t.due}>{t.schedule}</Cell>
                  <Cell>{t.location}</Cell>
                  <Cell>{t.next}</Cell>
                </tr>
              ))}
              <tr>
                <Cell /><Cell /><Cell /><Cell $marked /><Cell />
                <TopCell>11</TopCell>
              </tr>
            </tbody>
          </TrainTable>
        </Sheet>
      </SheetShade>
      <Ink viewBox="64 894 753 753" aria-hidden="true">
        <path d="M83 1654C87 1636 94 1618 105 1606C118 1597 129 1592 142 1592C157 1585 170 1586 180 1591C200 1602 222 1618 244 1622L259 1628" />
        <path d="M247 1618 233 1652" />
      </Ink>
    </Photo>
  );
}

/* ---------- composer ---------- */

const Composer = styled.form`
  position: relative;
  flex: none;
  display: flex;
  align-items: center;
  gap: 15px;
  padding: 0 13px 13px 15px;
`;

const InputPill = styled.div`
  flex: 1;
  min-width: 0;
  height: 136px;
  display: flex;
  align-items: center;
  padding: 0 37px 0 31px;
  border-radius: 68px;
  background: #fff;
  color: #868c92;
  box-shadow: 0 2px 3px rgba(0, 0, 0, 0.22);
`;

const MessageInput = styled.input`
  flex: 1;
  min-width: 0;
  height: 66px;
  margin: 0 20px 0 34px;
  padding: 2px 0 0;
  border: 0;
  outline: 0;
  background: none;
  color: #212121;
  font-family: Roboto, "Noto Sans", sans-serif;
  font-size: 54px;
  line-height: 64px;
  &::placeholder { color: #ccc; opacity: 1; }
`;

const PillActions = styled.div`
  display: flex;
  gap: 68px;
`;

const MicButton = styled.button`
  flex: none;
  width: 141px;
  height: 141px;
  border-radius: 50%;
  background: #02897b;
  box-shadow: 0 3px 6px rgba(0, 0, 0, 0.3);
`;

const ScrollDown = styled.button`
  position: absolute;
  right: 35px;
  bottom: 210px;
  width: 98px;
  height: 98px;
  border-radius: 50%;
  background: rgba(251, 250, 249, 0.93);
  box-shadow: 0 2px 5px rgba(0, 0, 0, 0.18);
`;

/* ---------- drawings ---------- */

function RailwayCrest() {
  const dots = Array.from({ length: 18 }, (_, i) => {
    const a = (i * Math.PI) / 9;
    return <circle key={i} cx={52 + 33.5 * Math.sin(a)} cy={52 - 33.5 * Math.cos(a)} r={1.5} fill="#ffd9b0" />;
  });
  const lines = Array.from({ length: 11 }, (_, i) => {
    const y = 27 + i * 4;
    const half = Math.sqrt(Math.max(0, 28 * 28 - (y - 52) ** 2));
    return <path key={i} d={`M${52 - half} ${y}H${52 + half}`} stroke="#fde8e4" strokeWidth={2} />;
  });
  return (
    <svg width="104" height="104" viewBox="0 0 104 104" role="img" aria-label="Indian Railways">
      <defs>
        <path id="crest-right" d="M46.500 13.400A39 39 0 0 1 70 86.600" />
        <path id="crest-left" d="M17 73A41 41 0 0 1 38 13.500" />
      </defs>
      <circle cx="52" cy="52" r="51.500" fill="#ee1c25" stroke="#33302c" strokeWidth="1" />
      {dots}
      <circle cx="52" cy="52" r="29" fill="#e8343a" stroke="#fff" strokeWidth="1.500" />
      {lines}
      <path d="M41 64H65L68 78H34Z" fill="#f6c9c4" />
      <path d="M41 66V77M45 66V77M49 66V77M53 66V77M57 66V77M61 66V77M40 70H66" stroke="#d43c40" strokeWidth="1.200" />
      <path d="M33 44Q42 30 53 30Q56 33 52 36Q44 37 38 48Z" fill="#fff" stroke="#e8343a" strokeWidth="1" />
      <path d="M35 45 41 47Q38 58 40 68L38 80H24Q31 66 35 45Z" fill="#fff" stroke="#f0a09c" strokeWidth="1" />
      <circle cx="52" cy="52" r="13" fill="#fff" stroke="#e8343a" strokeWidth="2" />
      <circle cx="52" cy="52" r="9" fill="#fff" stroke="#e8343a" strokeWidth="1.500" />
      <circle cx="52" cy="52" r="5" fill="#fbe3e0" />
      <g fill="#fff" fontFamily="Roboto, sans-serif" fontWeight="900" fontSize="11">
        <circle cx="38" cy="14" r="2" />
        <text><textPath href="#crest-right">INDIAN RAILWAYS</textPath></text>
        <text fontFamily="'Noto Sans Devanagari', 'Noto Sans', sans-serif" fontSize="12"><textPath href="#crest-left">भारतीय रेल</textPath></text>
      </g>
    </svg>
  );
}

function ForwardArrow() {
  return (
    <svg width="96" height="96" viewBox="0 0 96 96" aria-hidden="true">
      <path d="M55 27Q55 23 59 25L77 42Q79 44 77 46L59 63Q55 65 55 61V54C41 53 31 56 22 66Q19 69 19 66C23 48 34 35 55 34Z" fill="#fff" />
    </svg>
  );
}

export default function App() {
  return (
    <>
      <GlobalStyle />
      <Screen>
        <StatusBar>
          <Clock>3:08 PM</Clock>
          <svg width="34" height="34" viewBox="0 0 34 34" fill="none" stroke="#e4ecea" strokeWidth="2.500" strokeLinecap="round" aria-hidden="true">
            <circle cx="17" cy="19" r="13.500" />
            <path d="M12.500 17 17 21.500 22 16.500" strokeWidth="2.800" strokeLinejoin="round" />
            <path d="M2 8.500Q5 4.500 9 2.500M32 8.500Q29 4.500 25 2.500" strokeWidth="3.200" />
          </svg>
          <svg width="53" height="28" viewBox="0 0 53 28" fill="#e4ecea" aria-hidden="true">
            <path d="M14 25 21 20V28H14ZM25 17.500 30 15V28H25ZM32.500 12.500 37.500 10V28H32.500ZM40 7.500 45 5V28H40ZM48 2.500 53 0V28H48Z" />
          </svg>
          <Network>4G</Network>
          <Battery>87</Battery>
        </StatusBar>

        <AppBar>
          <Contact>
            <IconButton $w={48} aria-label="Back">
              <svg width="48" height="48" viewBox="0 0 48 48" fill="none" stroke="#fff" strokeWidth="5.500">
                <path d="M25 2 4 24 25 46M3 24H48" />
              </svg>
            </IconButton>
            <RailwayCrest />
            <ContactName>Aman Mittal Sir</ContactName>
          </Contact>
          <IconButton $w={64} aria-label="Video call">
            <svg width="64" height="40" viewBox="0 0 64 40" fill="#fff">
              <rect x="1" y="1" width="44" height="38" rx="4" />
              <path d="M48 15Q48 13 50 11L59 5.500Q63 4 63 8V32Q63 36 59 34.500L50 28Q48 26.500 48 25Z" />
            </svg>
          </IconButton>
          <IconButton $w={64} aria-label="Voice call">
            <svg width="54" height="54" viewBox="3 3 18 18" fill="#fff">
              <path d="M6.620 10.790c1.440 2.830 3.760 5.140 6.590 6.590l2.200-2.200c.27-.27.67-.36 1.020-.24 1.120.37 2.330.57 3.570.57.55 0 1 .45 1 1V20c0 .55-.45 1-1 1-9.390 0-17-7.610-17-17 0-.55.45-1 1-1h3.500c.55 0 1 .45 1 1 0 1.250.2 2.450.57 3.570.11.35.03.74-.25 1.020l-2.200 2.200z" />
            </svg>
          </IconButton>
          <IconButton $w={28} aria-label="More options">
            <svg width="12" height="48" viewBox="0 0 12 48" fill="#fff">
              <circle cx="6" cy="6" r="6" /><circle cx="6" cy="24" r="6" /><circle cx="6" cy="42" r="6" />
            </svg>
          </IconButton>
        </AppBar>

        <Chat>
          <Wallpaper />
          <MessageList>
            <MessageRow>
              <MediaBubble>
                <ForecastPhoto />
                <Caption>
                  <MessageText>Here it shows 15 in forwcast</MessageText>
                  <SentAt>4:01 pm</SentAt>
                </Caption>
              </MediaBubble>
              <ForwardButton aria-label="Forward"><ForwardArrow /></ForwardButton>
            </MessageRow>
            <MessageRow>
              <TextBubble>
                <MessageText $dark>ET HO</MessageText>
                <SentAt>4:01 pm</SentAt>
              </TextBubble>
            </MessageRow>
            <MessageRow>
              <MediaBubble>
                <TrainPhoto />
                <Caption>
                  <MessageText>Here it shows 16</MessageText>
                  <SentAt>4:01 pm</SentAt>
                </Caption>
              </MediaBubble>
              <ForwardButton aria-label="Forward"><ForwardArrow /></ForwardButton>
            </MessageRow>
          </MessageList>

          <ScrollDown aria-label="Scroll to latest">
            <svg width="98" height="98" viewBox="0 0 98 98" fill="none" stroke="#8d9599" strokeWidth="5" strokeLinecap="round">
              <path d="M34 41 49 54 64 41M34 54.500 49 67 64 54.500" />
            </svg>
          </ScrollDown>

          <Composer onSubmit={(e) => e.preventDefault()}>
            <InputPill>
              <IconButton type="button" $w={64} aria-label="Emoji">
                <svg width="64" height="64" viewBox="0 0 64 64" fill="none" stroke="#868c92" strokeWidth="5">
                  <circle cx="32" cy="32" r="29" />
                  <g fill="#868c92" stroke="none">
                    <ellipse cx="23.500" cy="25.500" rx="4" ry="5.800" />
                    <ellipse cx="40.500" cy="25.500" rx="4" ry="5.800" />
                    <path d="M15.500 36.500Q15 35.500 17 36Q32 39 47 36Q49 35.500 48.500 37.500C47 46 41 51.500 32 51.500C23 51.500 17 46 15.500 36.500ZM18.500 39.500C22 43.500 27 45 32 45C37 45 42 43.500 45.500 39.500Q32 42 18.500 39.500Z" fillRule="evenodd" />
                  </g>
                </svg>
              </IconButton>
              <MessageInput type="text" placeholder="Type a message" aria-label="Type a message" />
              <PillActions>
                <IconButton type="button" $w={64} aria-label="Attach">
                  <svg width="64" height="58" viewBox="0 0 64 58" fill="none" stroke="#868c92" strokeWidth="5" strokeLinecap="round">
                    <path d="M35 6.500 57 28.500C70 43 53 62 37 50L7 22C-4 10 11-3.500 21.500 6L45.500 30.500C52 37 43 43.500 37 38L21 21.500" />
                  </svg>
                </IconButton>
                <IconButton type="button" $w={64} aria-label="Camera">
                  <svg width="60" height="58" viewBox="0 0 60 58">
                    <rect width="60" height="58" rx="15" fill="#868a91" />
                    <circle cx="30" cy="29" r="14" fill="none" stroke="#fff" strokeWidth="5" />
                  </svg>
                </IconButton>
              </PillActions>
            </InputPill>
            <MicButton type="button" aria-label="Record voice message">
              <svg width="141" height="141" viewBox="0 0 141 141" fill="none" stroke="#fff" strokeWidth="6">
                <rect x="62" y="40.500" width="18" height="36.500" rx="9" fill="#fff" stroke="none" />
                <path d="M52 71C53 92 89 92 90 71M71 87V99" strokeLinecap="round" />
              </svg>
            </MicButton>
          </Composer>
        </Chat>
      </Screen>
    </>
  );
}
